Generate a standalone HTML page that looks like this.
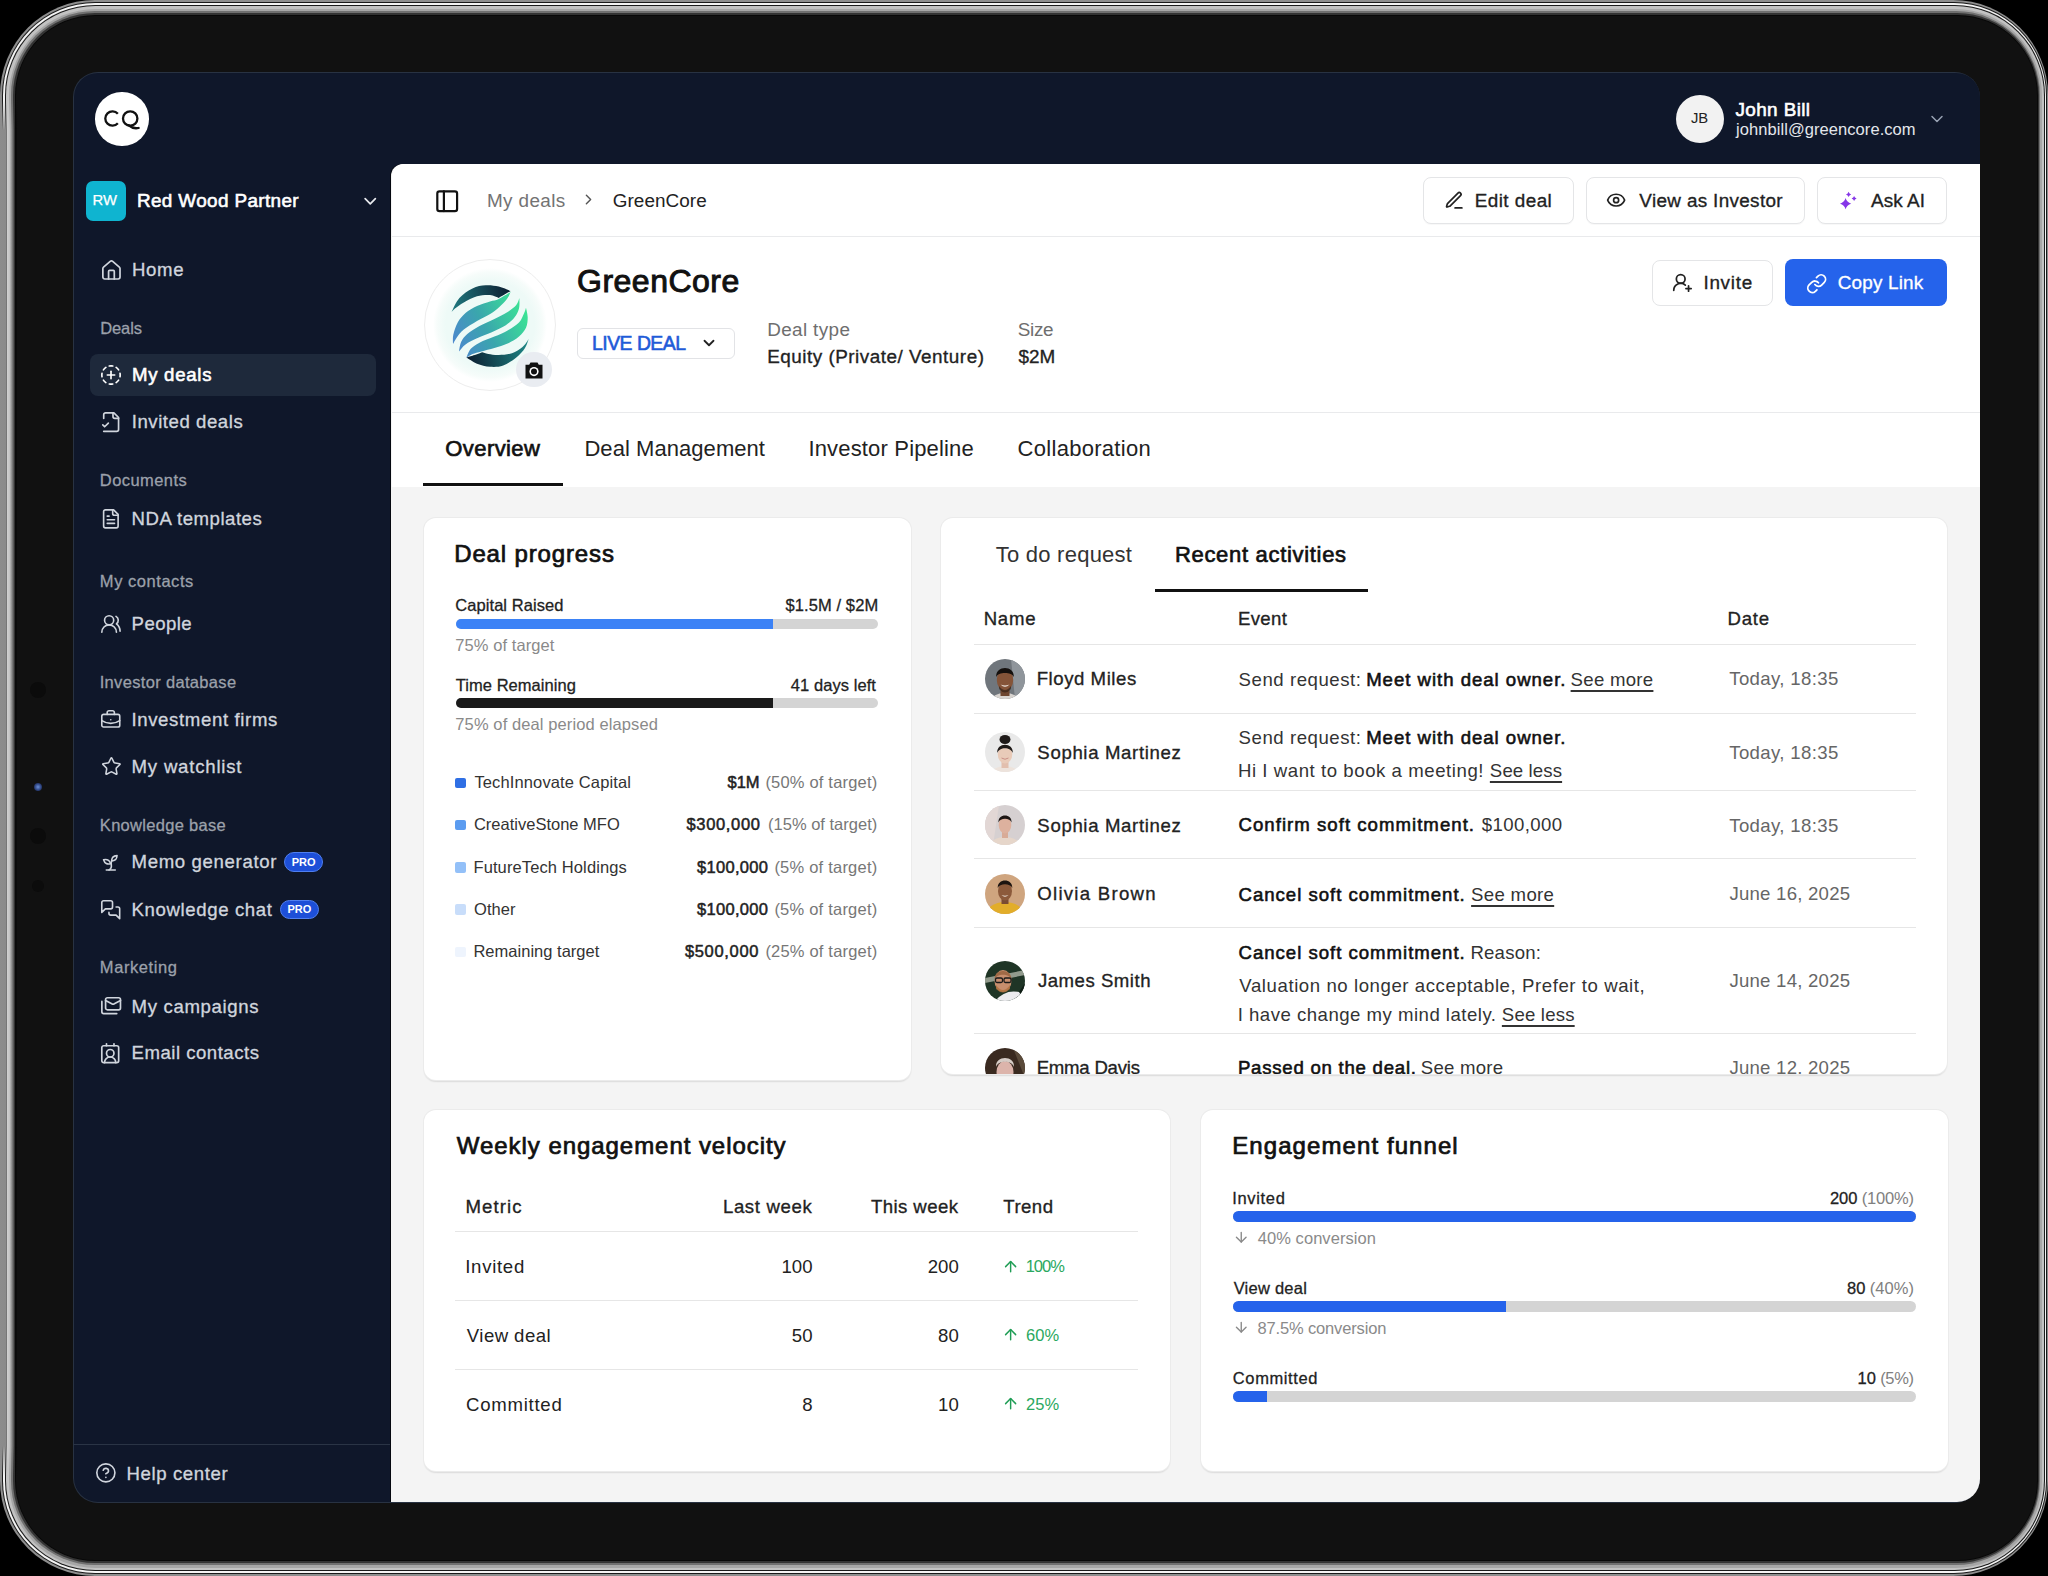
<!DOCTYPE html><html><head><meta charset="utf-8"><style>html,body{margin:0;padding:0;width:2048px;height:1576px;overflow:hidden;background:#000;font-family:"Liberation Sans", sans-serif;}*{box-sizing:border-box}</style></head><body>
<div style="position:absolute;left:0px;top:0px;right:0.00px;bottom:0px;border-radius:95px;background:#8e8e8e"></div>
<div style="position:absolute;left:1.8px;top:1.8px;right:1.24px;bottom:1.8px;border-radius:93.2px;background:#1a1a1a"></div>
<div style="position:absolute;left:2.8px;top:2.8px;right:1.93px;bottom:2.8px;border-radius:92.2px;background:#f4f4f4"></div>
<div style="position:absolute;left:4.8px;top:4.8px;right:3.31px;bottom:4.8px;border-radius:90.2px;background:#1c1c1c"></div>
<div style="position:absolute;left:5.6px;top:5.6px;right:3.86px;bottom:5.6px;border-radius:89.4px;background:#c2c2c2"></div>
<div style="position:absolute;left:8.5px;top:8.5px;right:5.86px;bottom:8.5px;border-radius:86.5px;background:#a6a6a6"></div>
<div style="position:absolute;left:11px;top:11px;right:7.59px;bottom:11px;border-radius:84px;background:#707070"></div>
<div style="position:absolute;left:13px;top:13px;right:8.97px;bottom:13px;border-radius:82px;background:#333"></div>
<div style="position:absolute;left:14.6px;top:14.6px;right:10.07px;bottom:14.6px;border-radius:80.4px;background:#080808"></div>
<div style="position:absolute;left:16px;top:16px;right:11.04px;bottom:16px;border-radius:79px;background:#111"></div>
<div style="position:absolute;top:100px;bottom:100px;left:0;width:17.5px;background:linear-gradient(to right,#8c8c8c 0,#8a8a8a 5.6px,#6a6a6a 6.4px,#d0d0d0 7.2px,#c4c4c4 9.5px,#a2a2a2 11px,#5a5a5a 13.5px,#0a0a0a 15.5px,#0a0a0a 16.3px,#111 17.5px);-webkit-mask-image:linear-gradient(to bottom,transparent 0,#000 30px,#000 calc(100% - 30px),transparent 100%)"></div>
<div style="position:absolute;left:30px;top:682px;width:16px;height:16px;border-radius:50%;background:#0b0b0b"></div>
<div style="position:absolute;left:30px;top:828px;width:16px;height:16px;border-radius:50%;background:#0b0b0b"></div>
<div style="position:absolute;left:32px;top:880px;width:12px;height:12px;border-radius:50%;background:#0c0c0c"></div>
<div style="position:absolute;left:34px;top:783px;width:8px;height:8px;border-radius:50%;background:radial-gradient(circle,#6a8fd8 0,#2a3f7a 60%,#111 100%)"></div>
<div style="position:absolute;left:72.6px;top:72px;width:1907.6px;height:1431.2px;border-radius:25px;background:#283242"></div>
<div style="position:absolute;left:73.9px;top:73.3px;width:1905.8px;height:1429px;border-radius:24px;background:#0f172a;overflow:hidden"></div>
<div style="position:absolute;left:95.00px;top:92.00px;width:53.50px;height:53.50px;border-radius:50%;background:#fff"></div>
<svg style="position:absolute;left:100px;top:105px;width:44px;height:30px" viewBox="0 0 44 30" fill="none" stroke="#111" stroke-width="2.3" stroke-linecap="butt"><path d="M17.85 8.68 A7.2 7.2 0 1 0 17.85 18.32"/><circle cx="30.2" cy="13.5" r="7.2"/><path d="M28.3 20.2 Q33 24.2 38.6 23" stroke-linecap="round"/></svg>
<div style="position:absolute;left:1676.00px;top:94.50px;width:48.00px;height:48.00px;border-radius:50%;background:#f2f2f2"></div>
<svg style="position:absolute;left:1927.00px;top:108.50px;width:20.00px;height:20.00px;" viewBox="0 0 24 24" fill="none" stroke="#98a2b3" stroke-width="1.8" stroke-linecap="round" stroke-linejoin="round"><path d="m6 9 6 6 6-6"/></svg>
<div style="position:absolute;left:86.00px;top:181.00px;width:40.00px;height:40.00px;border-radius:7px;background:#0fb4d0"></div>
<svg style="position:absolute;left:360.20px;top:190.50px;width:20.50px;height:20.50px;" viewBox="0 0 24 24" fill="none" stroke="#e8eaee" stroke-width="2" stroke-linecap="round" stroke-linejoin="round"><path d="m6 9 6 6 6-6"/></svg>
<div style="position:absolute;left:90.00px;top:354.00px;width:285.50px;height:42.00px;border-radius:8px;background:#1e293b"></div>
<svg style="position:absolute;left:99.50px;top:258.76px;width:22.89px;height:22.89px;" viewBox="0 0 24 24" fill="none" stroke="#d0d5dd" stroke-width="1.8" stroke-linecap="round" stroke-linejoin="round"><path d="M15 21v-8a1 1 0 0 0-1-1h-4a1 1 0 0 0-1 1v8"/><path d="M3 10a2 2 0 0 1 .709-1.528l7-5.999a2 2 0 0 1 2.582 0l7 5.999A2 2 0 0 1 21 10v9a2 2 0 0 1-2 2H5a2 2 0 0 1-2-2z"/></svg>
<svg style="position:absolute;left:99.99px;top:363.99px;width:22.02px;height:22.02px;" viewBox="0 0 24 24" fill="none" stroke="#fff" stroke-width="1.8" stroke-linecap="round" stroke-linejoin="round"><path d="M10.1 2.182a10 10 0 0 1 3.8 0"/><path d="M13.9 21.818a10 10 0 0 1-3.8 0"/><path d="M17.609 3.721a10 10 0 0 1 2.69 2.7"/><path d="M2.182 13.9a10 10 0 0 1 0-3.8"/><path d="M20.279 17.609a10 10 0 0 1-2.7 2.69"/><path d="M21.818 10.1a10 10 0 0 1 0 3.8"/><path d="M3.721 6.391a10 10 0 0 1 2.7-2.69"/><path d="M6.391 20.279a10 10 0 0 1-2.69-2.7"/><path d="M8 12h8"/><path d="M12 8v8"/></svg>
<svg style="position:absolute;left:99.55px;top:410.98px;width:22.27px;height:22.27px;" viewBox="0 0 24 24" fill="none" stroke="#d0d5dd" stroke-width="1.8" stroke-linecap="round" stroke-linejoin="round"><path d="M4 22h14a2 2 0 0 0 2-2V7l-5-5H6a2 2 0 0 0-2 2v4"/><path d="M14 2v4a2 2 0 0 0 2 2h4"/><path d="m3 15 2 2 4-4"/></svg>
<svg style="position:absolute;left:99.59px;top:507.50px;width:21.74px;height:21.74px;" viewBox="0 0 24 24" fill="none" stroke="#d0d5dd" stroke-width="1.8" stroke-linecap="round" stroke-linejoin="round"><path d="M15 2H6a2 2 0 0 0-2 2v16a2 2 0 0 0 2 2h12a2 2 0 0 0 2-2V7Z"/><path d="M14 2v4a2 2 0 0 0 2 2h4"/><path d="M10 9H8"/><path d="M16 13H8"/><path d="M16 17H8"/></svg>
<svg style="position:absolute;left:100.00px;top:613.08px;width:21.91px;height:21.91px;" viewBox="0 0 24 24" fill="none" stroke="#d0d5dd" stroke-width="1.8" stroke-linecap="round" stroke-linejoin="round"><path d="M18 21a8 8 0 0 0-16 0"/><circle cx="10" cy="8" r="5"/><path d="M22 20c0-3.37-2-6.5-4-8a5 5 0 0 0-.45-8.3"/></svg>
<svg style="position:absolute;left:100.01px;top:708.71px;width:21.55px;height:21.55px;" viewBox="0 0 24 24" fill="none" stroke="#d0d5dd" stroke-width="1.8" stroke-linecap="round" stroke-linejoin="round"><path d="M12 12h.01"/><path d="M16 6V4a2 2 0 0 0-2-2h-4a2 2 0 0 0-2 2v2"/><path d="M22 13a18.15 18.15 0 0 1-20 0"/><rect width="20" height="14" x="2" y="6" rx="2"/></svg>
<svg style="position:absolute;left:100.55px;top:756.35px;width:20.82px;height:20.82px;" viewBox="0 0 24 24" fill="none" stroke="#d0d5dd" stroke-width="1.8" stroke-linecap="round" stroke-linejoin="round"><path d="M11.525 2.295a.53.53 0 0 1 .95 0l2.31 4.679a2.123 2.123 0 0 0 1.595 1.16l5.166.756a.53.53 0 0 1 .294.904l-3.736 3.638a2.123 2.123 0 0 0-.611 1.878l.882 5.14a.53.53 0 0 1-.771.56l-4.618-2.428a2.122 2.122 0 0 0-1.973 0L6.396 21.01a.53.53 0 0 1-.77-.56l.881-5.139a2.122 2.122 0 0 0-.611-1.879L2.16 9.795a.53.53 0 0 1 .294-.906l5.165-.755a2.122 2.122 0 0 0 1.597-1.16z"/></svg>
<svg style="position:absolute;left:99.62px;top:851.62px;width:21.54px;height:21.54px;" viewBox="0 0 24 24" fill="none" stroke="#d0d5dd" stroke-width="1.8" stroke-linecap="round" stroke-linejoin="round"><path d="M7 20h10"/><path d="M10 20c5.5-2.5.8-6.4 3-10"/><path d="M9.5 9.4c1.1.8 1.8 2.2 2.3 3.7-2 .4-3.5.4-4.8-.3-1.2-.6-2.3-1.9-3-4.2 2.8-.5 4.4 0 5.5.8z"/><path d="M14.1 6a7 7 0 0 0-1.1 4c1.9-.1 3.3-.6 4.3-1.4 1-1 1.6-2.3 1.7-4.6-2.7.1-4 1-4.9 2z"/></svg>
<svg style="position:absolute;left:100.02px;top:899.32px;width:21.47px;height:21.47px;" viewBox="0 0 24 24" fill="none" stroke="#d0d5dd" stroke-width="1.8" stroke-linecap="round" stroke-linejoin="round"><path d="M14 9a2 2 0 0 1-2 2H6l-4 4V4a2 2 0 0 1 2-2h8a2 2 0 0 1 2 2z"/><path d="M18 9h2a2 2 0 0 1 2 2v11l-4-4h-6a2 2 0 0 1-2-2v-1"/></svg>
<svg style="position:absolute;left:99.98px;top:993.61px;width:22.35px;height:22.35px;" viewBox="0 0 24 24" fill="none" stroke="#d0d5dd" stroke-width="1.8" stroke-linecap="round" stroke-linejoin="round"><rect width="16" height="13" x="6" y="4" rx="2"/><path d="m22 7-7.1 3.78c-.57.3-1.23.3-1.8 0L6 7"/><path d="M2 8v11c0 1.1.9 2 2 2h14"/></svg>
<svg style="position:absolute;left:99.03px;top:1042.37px;width:22.47px;height:22.47px;" viewBox="0 0 24 24" fill="none" stroke="#d0d5dd" stroke-width="1.8" stroke-linecap="round" stroke-linejoin="round"><path d="M16 2v2"/><path d="M17.915 22a6 6 0 0 0-12 0"/><path d="M8 2v2"/><circle cx="12" cy="12" r="4"/><rect x="3" y="4" width="18" height="18" rx="2"/></svg>
<div style="position:absolute;left:284.30px;top:852.10px;width:38.80px;height:19.70px;border-radius:10px;background:#1d4fd8;border:1px solid #4f7ff0"></div>
<div style="position:absolute;left:280.00px;top:899.75px;width:39.00px;height:19.65px;border-radius:10px;background:#1d4fd8;border:1px solid #4f7ff0"></div>
<div style="position:absolute;left:73.00px;top:1444.00px;width:318.00px;height:1.00px;background:#2a3445"></div>
<svg style="position:absolute;left:94.90px;top:1462.30px;width:21.74px;height:21.74px;" viewBox="0 0 24 24" fill="none" stroke="#d0d5dd" stroke-width="1.8" stroke-linecap="round" stroke-linejoin="round"><circle cx="12" cy="12" r="10"/><path d="M9.09 9a3 3 0 0 1 5.83 1c0 2-3 3-3 3"/><path d="M12 17h.01"/></svg>
<div style="position:absolute;left:391px;top:163.5px;width:1588.7px;height:1338.8px;border-top-left-radius:12px;border-bottom-right-radius:23px;background:#f4f4f4;box-shadow:-1px 0 0 #05080f"></div>
<div style="position:absolute;left:391.5px;top:163.5px;width:1588.5px;height:323px;border-top-left-radius:12px;background:#fff"></div>
<div style="position:absolute;left:392.00px;top:236.00px;width:1588.00px;height:1.30px;background:#e9eaec"></div>
<div style="position:absolute;left:392.00px;top:412.00px;width:1588.00px;height:1.30px;background:#e9eaec"></div>
<svg style="position:absolute;left:433.80px;top:187.80px;width:26.40px;height:26.40px;" viewBox="0 0 24 24" fill="none" stroke="#111" stroke-width="2" stroke-linecap="round" stroke-linejoin="round"><rect width="18" height="18" x="3" y="3" rx="2"/><path d="M9 3v18"/></svg>
<svg style="position:absolute;left:580.00px;top:191.00px;width:17.00px;height:17.00px;" viewBox="0 0 24 24" fill="none" stroke="#555" stroke-width="2" stroke-linecap="round" stroke-linejoin="round"><path d="m9 18 6-6-6-6"/></svg>
<div style="position:absolute;left:1422.50px;top:177.00px;width:151.25px;height:46.50px;border:1px solid #e4e5e7;border-radius:8px;background:#fff;box-shadow:0 1px 1px rgba(0,0,0,0.03)"></div>
<div style="position:absolute;left:1585.50px;top:177.00px;width:219.50px;height:46.50px;border:1px solid #e4e5e7;border-radius:8px;background:#fff;box-shadow:0 1px 1px rgba(0,0,0,0.03)"></div>
<div style="position:absolute;left:1817.00px;top:177.00px;width:130.00px;height:46.50px;border:1px solid #e4e5e7;border-radius:8px;background:#fff;box-shadow:0 1px 1px rgba(0,0,0,0.03)"></div>
<svg style="position:absolute;left:1443.72px;top:190.30px;width:20.44px;height:20.44px;" viewBox="0 0 24 24" fill="none" stroke="#222" stroke-width="2" stroke-linecap="round" stroke-linejoin="round"><path d="M13 21h8"/><path d="M16.376 3.622a1 1 0 0 1 3.002 3.002L7.368 18.635a2 2 0 0 1-.855.506l-2.872.838a.5.5 0 0 1-.62-.62l.838-2.872a2 2 0 0 1 .506-.854z"/></svg>
<svg style="position:absolute;left:1606.16px;top:189.62px;width:20.25px;height:20.25px;" viewBox="0 0 24 24" fill="none" stroke="#222" stroke-width="2" stroke-linecap="round" stroke-linejoin="round"><path d="M2.062 12.348a1 1 0 0 1 0-.696 10.75 10.75 0 0 1 19.876 0 1 1 0 0 1 0 .696 10.75 10.75 0 0 1-19.876 0"/><circle cx="12" cy="12" r="3"/></svg>
<svg style="position:absolute;left:1836px;top:189px;width:24px;height:24px" viewBox="1836 189 24 24"><path fill="#8636e8" d="M1845.60 198.10 Q1846.83 202.47 1851.20 203.70 Q1846.83 204.93 1845.60 209.30 Q1844.37 204.93 1840.00 203.70 Q1844.37 202.47 1845.60 198.10Z M1848.60 191.80 Q1849.17 193.83 1851.20 194.40 Q1849.17 194.97 1848.60 197.00 Q1848.03 194.97 1846.00 194.40 Q1848.03 193.83 1848.60 191.80Z M1854.10 196.10 Q1854.65 198.05 1856.60 198.60 Q1854.65 199.15 1854.10 201.10 Q1853.55 199.15 1851.60 198.60 Q1853.55 198.05 1854.10 196.10Z"/></svg>
<div style="position:absolute;left:423.5px;top:258.7px;width:132.5px;height:132.5px;border-radius:50%;border:1.5px solid #ededed;background:#fff"></div>
<div style="position:absolute;left:432.5px;top:267.7px;width:114px;height:114px;border-radius:50%;background:radial-gradient(circle closest-side,#eefaf6 0%,#eefaf7 78%,#f6fcfa 92%,rgba(255,255,255,0) 100%)"></div>
<svg style="position:absolute;left:420px;top:256px;width:140px;height:138px" viewBox="0 0 140 138"><defs><linearGradient id="lgb" gradientUnits="userSpaceOnUse" x1="33" y1="90" x2="106" y2="50"><stop offset="0" stop-color="#4d86cf"/><stop offset="0.45" stop-color="#3aa6ad"/><stop offset="1" stop-color="#3be893"/></linearGradient><linearGradient id="lgt" gradientUnits="userSpaceOnUse" x1="31" y1="50" x2="91" y2="38"><stop offset="0" stop-color="#1f7a80"/><stop offset="1" stop-color="#0c1d30"/></linearGradient><linearGradient id="lgo" gradientUnits="userSpaceOnUse" x1="46" y1="100" x2="109" y2="85"><stop offset="0" stop-color="#0c1d30"/><stop offset="1" stop-color="#1f8a88"/></linearGradient></defs><path d="M31.50 56.00 C32.82 53.67 35.90 45.93 39.40 42.00 C42.90 38.07 48.12 34.52 52.50 32.40 C56.88 30.28 61.32 29.60 65.70 29.30 C70.08 29.00 74.65 29.65 78.80 30.60 C82.95 31.55 88.63 34.27 90.60 35.00 L90.60 35.00 C88.63 36.17 80.77 40.83 78.80 42.00 L78.80 42.00 C77.33 41.50 73.63 39.28 70.00 39.00 C66.37 38.72 61.37 39.07 57.00 40.30 C52.63 41.53 47.47 44.37 43.80 46.40 C40.13 48.43 37.05 50.90 35.00 52.50 C32.95 54.10 32.08 55.42 31.50 56.00 Z" fill="url(#lgt)"/><path d="M33.00 88.00 C33.05 86.47 32.52 82.38 33.30 78.80 C34.08 75.22 35.67 70.13 37.70 66.50 C39.73 62.87 42.28 59.75 45.50 57.00 C48.72 54.25 52.92 51.92 57.00 50.00 C61.08 48.08 66.37 46.67 70.00 45.50 C73.63 44.33 75.37 44.58 78.80 43.00 C82.23 41.42 88.63 37.17 90.60 36.00 L90.60 36.00 C90.10 37.00 89.13 39.83 87.60 42.00 C86.07 44.17 84.03 46.50 81.40 49.00 C78.77 51.50 75.87 54.33 71.80 57.00 C67.73 59.67 61.67 62.23 57.00 65.00 C52.33 67.77 47.17 70.87 43.80 73.60 C40.43 76.33 38.60 79.00 36.80 81.40 C35.00 83.80 33.63 86.90 33.00 88.00 Z" fill="url(#lgb)"/><path d="M39.00 95.40 C39.37 93.80 39.82 88.70 41.20 85.80 C42.58 82.90 44.25 80.63 47.30 78.00 C50.35 75.37 54.98 72.50 59.50 70.00 C64.02 67.50 69.72 65.33 74.40 63.00 C79.08 60.67 83.95 58.33 87.60 56.00 C91.25 53.67 94.33 51.33 96.30 49.00 C98.27 46.67 98.88 43.17 99.40 42.00 L99.40 42.00 C99.33 43.75 99.80 49.28 99.00 52.50 C98.20 55.72 96.80 58.52 94.60 61.30 C92.40 64.08 89.60 66.72 85.80 69.20 C82.00 71.68 76.60 74.02 71.80 76.20 C67.00 78.38 61.38 80.27 57.00 82.30 C52.62 84.33 48.50 86.22 45.50 88.40 C42.50 90.58 40.08 94.23 39.00 95.40 Z" fill="url(#lgb)"/><path d="M46.40 101.60 C47.13 100.13 48.62 95.28 50.80 92.80 C52.98 90.32 55.57 88.73 59.50 86.70 C63.43 84.67 69.72 82.65 74.40 80.60 C79.08 78.55 83.50 76.75 87.60 74.40 C91.70 72.05 96.23 69.40 99.00 66.50 C101.77 63.60 103.03 59.47 104.20 57.00 C105.37 54.53 105.70 52.58 106.00 51.70 L106.00 51.70 C106.28 53.30 107.70 57.95 107.70 61.30 C107.70 64.65 107.45 68.58 106.00 71.80 C104.55 75.02 102.07 77.97 99.00 80.60 C95.93 83.23 91.70 85.70 87.60 87.60 C83.50 89.50 78.78 90.70 74.40 92.00 C70.02 93.30 64.95 94.40 61.30 95.40 C57.65 96.40 54.98 96.97 52.50 98.00 C50.02 99.03 47.42 101.00 46.40 101.60 Z" fill="url(#lgb)"/><path d="M46.40 101.60 C48.17 102.62 53.07 106.17 57.00 107.70 C60.93 109.23 65.63 110.50 70.00 110.80 C74.37 111.10 78.82 111.03 83.20 109.50 C87.58 107.97 92.67 104.52 96.30 101.60 C99.93 98.68 102.95 95.07 105.00 92.00 C107.05 88.93 108.00 84.67 108.60 83.20 L108.60 83.20 C107.58 84.50 105.27 88.67 102.50 91.00 C99.73 93.33 95.95 95.87 92.00 97.20 C88.05 98.53 82.75 98.87 78.80 99.00 C74.85 99.13 71.07 98.45 68.30 98.00 C65.53 97.55 63.22 96.58 62.20 96.30 L62.20 96.30 C60.58 96.88 55.13 98.92 52.50 99.80 C49.87 100.68 47.42 101.30 46.40 101.60 Z" fill="url(#lgo)"/></svg>
<div style="position:absolute;left:516px;top:351.5px;width:35.5px;height:35.5px;border-radius:50%;background:#e9ecf1"></div>
<svg style="position:absolute;left:525px;top:361.5px;width:18px;height:17px" viewBox="0 0 18 17"><path fill="#111" d="M5.5 0.5 H12.5 L13.8 2.8 H17.5 V16.5 H0.5 V2.8 H4.2Z"/><circle cx="9" cy="9.6" r="4.6" fill="#fff"/><circle cx="9" cy="9.6" r="3" fill="#111"/></svg>
<div style="position:absolute;left:577.00px;top:328.00px;width:158.00px;height:30.75px;border:1px solid #e2e3e6;border-radius:6px;background:#fff"></div>
<svg style="position:absolute;left:700.00px;top:334.00px;width:18.00px;height:18.00px;" viewBox="0 0 24 24" fill="none" stroke="#222" stroke-width="2.4" stroke-linecap="round" stroke-linejoin="round"><path d="m6 9 6 6 6-6"/></svg>
<div style="position:absolute;left:1652.00px;top:259.50px;width:121.25px;height:46.50px;border:1px solid #e4e5e7;border-radius:8px;background:#fff"></div>
<svg style="position:absolute;left:1672.13px;top:272.26px;width:20.92px;height:20.92px;" viewBox="0 0 24 24" fill="none" stroke="#222" stroke-width="2" stroke-linecap="round" stroke-linejoin="round"><path d="M2 21a8 8 0 0 1 13.292-6"/><circle cx="10" cy="8" r="5"/><path d="M19 16v6"/><path d="M22 19h-6"/></svg>
<div style="position:absolute;left:1785.00px;top:259.00px;width:162.00px;height:47.00px;border-radius:8px;background:#2563eb"></div>
<svg style="position:absolute;left:1805.91px;top:272.61px;width:21.38px;height:21.38px;" viewBox="0 0 24 24" fill="none" stroke="#fff" stroke-width="2" stroke-linecap="round" stroke-linejoin="round"><path d="M10 13a5 5 0 0 0 7.54.54l3-3a5 5 0 0 0-7.07-7.07l-1.72 1.71"/><path d="M14 11a5 5 0 0 0-7.54-.54l-3 3a5 5 0 0 0 7.07 7.07l1.71-1.71"/></svg>
<div style="position:absolute;left:423.40px;top:483.00px;width:139.90px;height:3.00px;background:#111"></div>
<div style="position:absolute;left:424.00px;top:518.00px;width:487.00px;height:562.00px;border-radius:12px;background:#fff;box-shadow:0 0 0 1px #ebebeb,0 1.2px 1.5px rgba(0,0,0,0.10)"></div>
<div style="position:absolute;left:941.00px;top:518.00px;width:1006.00px;height:556.00px;border-radius:12px;background:#fff;box-shadow:0 0 0 1px #ebebeb,0 1.2px 1.5px rgba(0,0,0,0.10)"></div>
<div style="position:absolute;left:424.00px;top:1110.00px;width:745.50px;height:361.00px;border-radius:12px;background:#fff;box-shadow:0 0 0 1px #ebebeb,0 1.2px 1.5px rgba(0,0,0,0.10)"></div>
<div style="position:absolute;left:1201.00px;top:1110.00px;width:746.50px;height:361.00px;border-radius:12px;background:#fff;box-shadow:0 0 0 1px #ebebeb,0 1.2px 1.5px rgba(0,0,0,0.10)"></div>
<div style="position:absolute;left:455.50px;top:618.75px;width:422.50px;height:10.50px;border-radius:6px;background:#d4d4d4;overflow:hidden"><div style="position:absolute;left:0;top:0;bottom:0;width:317px;background:#3b82f6"></div></div>
<div style="position:absolute;left:455.50px;top:698.25px;width:422.50px;height:10.00px;border-radius:6px;background:#d4d4d4;overflow:hidden"><div style="position:absolute;left:0;top:0;bottom:0;width:317px;background:#1a1a1a"></div></div>
<div style="position:absolute;left:455.30px;top:777.50px;width:10.50px;height:10.50px;border-radius:2px;background:#2f6fe4"></div>
<div style="position:absolute;left:455.30px;top:819.77px;width:10.50px;height:10.50px;border-radius:2px;background:#5b9cf0"></div>
<div style="position:absolute;left:455.30px;top:862.04px;width:10.50px;height:10.50px;border-radius:2px;background:#93c0f8"></div>
<div style="position:absolute;left:455.30px;top:904.31px;width:10.50px;height:10.50px;border-radius:2px;background:#c8ddfa"></div>
<div style="position:absolute;left:455.30px;top:946.58px;width:10.50px;height:10.50px;border-radius:2px;background:#eef4fd"></div>
<div style="position:absolute;left:455.00px;top:1231.00px;width:682.50px;height:1.20px;background:#e6e6e6"></div>
<div style="position:absolute;left:455.00px;top:1300.00px;width:682.50px;height:1.20px;background:#e6e6e6"></div>
<div style="position:absolute;left:455.00px;top:1369.00px;width:682.50px;height:1.20px;background:#e6e6e6"></div>
<svg style="position:absolute;left:1001.62px;top:1257.62px;width:17.25px;height:17.25px;" viewBox="0 0 24 24" fill="none" stroke="#1f9d55" stroke-width="2.0" stroke-linecap="round" stroke-linejoin="round"><path d="m5 12 7-7 7 7"/><path d="M12 19V5"/></svg>
<svg style="position:absolute;left:1001.62px;top:1326.38px;width:17.25px;height:17.25px;" viewBox="0 0 24 24" fill="none" stroke="#1f9d55" stroke-width="2.0" stroke-linecap="round" stroke-linejoin="round"><path d="m5 12 7-7 7 7"/><path d="M12 19V5"/></svg>
<svg style="position:absolute;left:1001.62px;top:1395.12px;width:17.25px;height:17.25px;" viewBox="0 0 24 24" fill="none" stroke="#1f9d55" stroke-width="2.0" stroke-linecap="round" stroke-linejoin="round"><path d="m5 12 7-7 7 7"/><path d="M12 19V5"/></svg>
<div style="position:absolute;left:1233.00px;top:1211.25px;width:682.50px;height:10.50px;border-radius:6px;background:#d4d4d4;overflow:hidden"><div style="position:absolute;left:0;top:0;bottom:0;width:682.5px;background:#2563eb"></div></div>
<div style="position:absolute;left:1233.00px;top:1301.25px;width:682.50px;height:10.50px;border-radius:6px;background:#d4d4d4;overflow:hidden"><div style="position:absolute;left:0;top:0;bottom:0;width:272.5px;background:#2563eb"></div></div>
<div style="position:absolute;left:1233.00px;top:1391.25px;width:682.50px;height:10.50px;border-radius:6px;background:#d4d4d4;overflow:hidden"><div style="position:absolute;left:0;top:0;bottom:0;width:34.0px;background:#2563eb"></div></div>
<svg style="position:absolute;left:1233.25px;top:1229.25px;width:16.50px;height:16.50px;" viewBox="0 0 24 24" fill="none" stroke="#8a8a8a" stroke-width="2" stroke-linecap="round" stroke-linejoin="round"><path d="M12 5v14"/><path d="m19 12-7 7-7-7"/></svg>
<svg style="position:absolute;left:1233.25px;top:1319.25px;width:16.50px;height:16.50px;" viewBox="0 0 24 24" fill="none" stroke="#8a8a8a" stroke-width="2" stroke-linecap="round" stroke-linejoin="round"><path d="M12 5v14"/><path d="m19 12-7 7-7-7"/></svg>
<div style="position:absolute;left:1690.97px;top:111.00px;font-size:14.80px;line-height:14.80px;font-weight:400;color:#222;letter-spacing:0.000px;white-space:nowrap;">JB</div>
<div style="position:absolute;left:1735.40px;top:101.00px;font-size:18.90px;line-height:18.90px;font-weight:400;-webkit-text-stroke:0.59px currentColor;color:#fff;letter-spacing:0.407px;white-space:nowrap;">John Bill</div>
<div style="position:absolute;left:1736.10px;top:121.00px;font-size:16.50px;line-height:16.50px;font-weight:400;color:#e4e7ec;letter-spacing:0.062px;white-space:nowrap;">johnbill@greencore.com</div>
<div style="position:absolute;left:92.49px;top:193.00px;font-size:14.80px;line-height:14.80px;font-weight:400;-webkit-text-stroke:0.25px currentColor;color:#fff;letter-spacing:0.000px;white-space:nowrap;">RW</div>
<div style="position:absolute;left:136.90px;top:192.00px;font-size:18.90px;line-height:18.90px;font-weight:400;-webkit-text-stroke:0.59px currentColor;color:#fff;letter-spacing:0.374px;white-space:nowrap;">Red Wood Partner</div>
<div style="position:absolute;left:131.92px;top:261.00px;font-size:18.60px;line-height:18.60px;font-weight:400;-webkit-text-stroke:0.32px currentColor;color:#d0d5dd;letter-spacing:0.701px;white-space:nowrap;">Home</div>
<div style="position:absolute;left:131.92px;top:366.00px;font-size:18.60px;line-height:18.60px;font-weight:400;-webkit-text-stroke:0.58px currentColor;color:#fff;letter-spacing:0.735px;white-space:nowrap;">My deals</div>
<div style="position:absolute;left:131.73px;top:413.00px;font-size:18.60px;line-height:18.60px;font-weight:400;-webkit-text-stroke:0.32px currentColor;color:#d0d5dd;letter-spacing:0.549px;white-space:nowrap;">Invited deals</div>
<div style="position:absolute;left:131.57px;top:510.00px;font-size:18.60px;line-height:18.60px;font-weight:400;-webkit-text-stroke:0.32px currentColor;color:#d0d5dd;letter-spacing:0.514px;white-space:nowrap;">NDA templates</div>
<div style="position:absolute;left:131.57px;top:615.00px;font-size:18.60px;line-height:18.60px;font-weight:400;-webkit-text-stroke:0.32px currentColor;color:#d0d5dd;letter-spacing:0.431px;white-space:nowrap;">People</div>
<div style="position:absolute;left:131.38px;top:711.00px;font-size:18.60px;line-height:18.60px;font-weight:400;-webkit-text-stroke:0.32px currentColor;color:#d0d5dd;letter-spacing:0.640px;white-space:nowrap;">Investment firms</div>
<div style="position:absolute;left:131.57px;top:758.00px;font-size:18.60px;line-height:18.60px;font-weight:400;-webkit-text-stroke:0.32px currentColor;color:#d0d5dd;letter-spacing:0.792px;white-space:nowrap;">My watchlist</div>
<div style="position:absolute;left:131.57px;top:853.00px;font-size:18.60px;line-height:18.60px;font-weight:400;-webkit-text-stroke:0.32px currentColor;color:#d0d5dd;letter-spacing:0.647px;white-space:nowrap;">Memo generator</div>
<div style="position:absolute;left:131.57px;top:901.00px;font-size:18.60px;line-height:18.60px;font-weight:400;-webkit-text-stroke:0.32px currentColor;color:#d0d5dd;letter-spacing:0.619px;white-space:nowrap;">Knowledge chat</div>
<div style="position:absolute;left:131.57px;top:998.00px;font-size:18.60px;line-height:18.60px;font-weight:400;-webkit-text-stroke:0.32px currentColor;color:#d0d5dd;letter-spacing:0.648px;white-space:nowrap;">My campaigns</div>
<div style="position:absolute;left:131.57px;top:1044.00px;font-size:18.60px;line-height:18.60px;font-weight:400;-webkit-text-stroke:0.32px currentColor;color:#d0d5dd;letter-spacing:0.499px;white-space:nowrap;">Email contacts</div>
<div style="position:absolute;left:100.35px;top:320.00px;font-size:16.50px;line-height:16.50px;font-weight:400;-webkit-text-stroke:0.28px currentColor;color:#9ca1ab;letter-spacing:-0.159px;white-space:nowrap;">Deals</div>
<div style="position:absolute;left:99.85px;top:472.00px;font-size:16.50px;line-height:16.50px;font-weight:400;-webkit-text-stroke:0.28px currentColor;color:#9ca1ab;letter-spacing:0.425px;white-space:nowrap;">Documents</div>
<div style="position:absolute;left:99.85px;top:573.00px;font-size:16.50px;line-height:16.50px;font-weight:400;-webkit-text-stroke:0.28px currentColor;color:#9ca1ab;letter-spacing:0.542px;white-space:nowrap;">My contacts</div>
<div style="position:absolute;left:99.68px;top:674.00px;font-size:16.50px;line-height:16.50px;font-weight:400;-webkit-text-stroke:0.28px currentColor;color:#9ca1ab;letter-spacing:0.330px;white-space:nowrap;">Investor database</div>
<div style="position:absolute;left:99.85px;top:817.00px;font-size:16.50px;line-height:16.50px;font-weight:400;-webkit-text-stroke:0.28px currentColor;color:#9ca1ab;letter-spacing:0.291px;white-space:nowrap;">Knowledge base</div>
<div style="position:absolute;left:99.85px;top:959.00px;font-size:16.50px;line-height:16.50px;font-weight:400;-webkit-text-stroke:0.28px currentColor;color:#9ca1ab;letter-spacing:0.571px;white-space:nowrap;">Marketing</div>
<div style="position:absolute;left:291.76px;top:856.72px;font-size:11.00px;line-height:11.00px;font-weight:700;color:#fff;letter-spacing:0.000px;white-space:nowrap;">PRO</div>
<div style="position:absolute;left:287.46px;top:904.37px;font-size:11.00px;line-height:11.00px;font-weight:700;color:#fff;letter-spacing:0.000px;white-space:nowrap;">PRO</div>
<div style="position:absolute;left:126.57px;top:1465.00px;font-size:18.60px;line-height:18.60px;font-weight:400;-webkit-text-stroke:0.32px currentColor;color:#d0d5dd;letter-spacing:0.595px;white-space:nowrap;">Help center</div>
<div style="position:absolute;left:486.90px;top:192.00px;font-size:18.90px;line-height:18.90px;font-weight:400;color:#737373;letter-spacing:0.392px;white-space:nowrap;">My deals</div>
<div style="position:absolute;left:612.75px;top:192.00px;font-size:18.90px;line-height:18.90px;font-weight:400;color:#222;letter-spacing:0.055px;white-space:nowrap;">GreenCore</div>
<div style="position:absolute;left:1474.65px;top:192.00px;font-size:18.90px;line-height:18.90px;font-weight:400;-webkit-text-stroke:0.32px currentColor;color:#222;letter-spacing:0.456px;white-space:nowrap;">Edit deal</div>
<div style="position:absolute;left:1639.37px;top:192.00px;font-size:18.90px;line-height:18.90px;font-weight:400;-webkit-text-stroke:0.32px currentColor;color:#222;letter-spacing:0.333px;white-space:nowrap;">View as Investor</div>
<div style="position:absolute;left:1870.96px;top:192.00px;font-size:18.90px;line-height:18.90px;font-weight:400;-webkit-text-stroke:0.32px currentColor;color:#222;letter-spacing:0.099px;white-space:nowrap;">Ask AI</div>
<div style="position:absolute;left:577.09px;top:264.99px;font-size:32.00px;line-height:32.00px;font-weight:400;-webkit-text-stroke:0.99px currentColor;color:#111;letter-spacing:0.479px;white-space:nowrap;">GreenCore</div>
<div style="position:absolute;left:592.11px;top:334.00px;font-size:19.40px;line-height:19.40px;font-weight:400;-webkit-text-stroke:0.60px currentColor;color:#1f5bd8;letter-spacing:-0.531px;white-space:nowrap;">LIVE DEAL</div>
<div style="position:absolute;left:767.15px;top:321.00px;font-size:18.90px;line-height:18.90px;font-weight:400;color:#6e6e6e;letter-spacing:0.367px;white-space:nowrap;">Deal type</div>
<div style="position:absolute;left:767.15px;top:348.00px;font-size:18.90px;line-height:18.90px;font-weight:400;-webkit-text-stroke:0.32px currentColor;color:#222;letter-spacing:0.503px;white-space:nowrap;">Equity (Private/ Venture)</div>
<div style="position:absolute;left:1017.84px;top:321.00px;font-size:18.90px;line-height:18.90px;font-weight:400;color:#6e6e6e;letter-spacing:-0.317px;white-space:nowrap;">Size</div>
<div style="position:absolute;left:1018.50px;top:348.00px;font-size:18.90px;line-height:18.90px;font-weight:400;-webkit-text-stroke:0.32px currentColor;color:#222;letter-spacing:0.000px;white-space:nowrap;">$2M</div>
<div style="position:absolute;left:1703.46px;top:274.00px;font-size:18.90px;line-height:18.90px;font-weight:400;-webkit-text-stroke:0.32px currentColor;color:#222;letter-spacing:0.707px;white-space:nowrap;">Invite</div>
<div style="position:absolute;left:1837.74px;top:274.00px;font-size:18.90px;line-height:18.90px;font-weight:400;-webkit-text-stroke:0.32px currentColor;color:#fff;letter-spacing:0.191px;white-space:nowrap;">Copy Link</div>
<div style="position:absolute;left:445.36px;top:437.79px;font-size:22.00px;line-height:22.00px;font-weight:400;-webkit-text-stroke:0.68px currentColor;color:#111;letter-spacing:0.401px;white-space:nowrap;">Overview</div>
<div style="position:absolute;left:584.40px;top:437.79px;font-size:22.00px;line-height:22.00px;font-weight:400;color:#222;letter-spacing:0.057px;white-space:nowrap;">Deal Management</div>
<div style="position:absolute;left:808.42px;top:437.79px;font-size:22.00px;line-height:22.00px;font-weight:400;color:#222;letter-spacing:0.169px;white-space:nowrap;">Investor Pipeline</div>
<div style="position:absolute;left:1017.58px;top:437.79px;font-size:22.00px;line-height:22.00px;font-weight:400;color:#222;letter-spacing:0.292px;white-space:nowrap;">Collaboration</div>
<div style="position:absolute;left:454.23px;top:541.53px;font-size:24.00px;line-height:24.00px;font-weight:400;-webkit-text-stroke:0.74px currentColor;color:#111;letter-spacing:0.857px;white-space:nowrap;">Deal progress</div>
<div style="position:absolute;left:455.36px;top:597.00px;font-size:16.50px;line-height:16.50px;font-weight:400;-webkit-text-stroke:0.28px currentColor;color:#222;letter-spacing:0.053px;white-space:nowrap;">Capital Raised</div>
<div style="position:absolute;left:785.52px;top:597.00px;font-size:16.50px;line-height:16.50px;font-weight:400;-webkit-text-stroke:0.28px currentColor;color:#222;letter-spacing:0.092px;white-space:nowrap;">$1.5M / $2M</div>
<div style="position:absolute;left:455.35px;top:637.00px;font-size:16.50px;line-height:16.50px;font-weight:400;color:#8a8a8a;letter-spacing:0.077px;white-space:nowrap;">75% of target</div>
<div style="position:absolute;left:455.83px;top:677.00px;font-size:16.50px;line-height:16.50px;font-weight:400;-webkit-text-stroke:0.28px currentColor;color:#222;letter-spacing:0.040px;white-space:nowrap;">Time Remaining</div>
<div style="position:absolute;left:790.82px;top:677.00px;font-size:16.50px;line-height:16.50px;font-weight:400;-webkit-text-stroke:0.28px currentColor;color:#222;letter-spacing:0.065px;white-space:nowrap;">41 days left</div>
<div style="position:absolute;left:455.35px;top:716.00px;font-size:16.50px;line-height:16.50px;font-weight:400;color:#8a8a8a;letter-spacing:0.101px;white-space:nowrap;">75% of deal period elapsed</div>
<div style="position:absolute;left:474.43px;top:774.00px;font-size:16.50px;line-height:16.50px;font-weight:400;color:#333;letter-spacing:0.125px;white-space:nowrap;">TechInnovate Capital</div>
<div style="position:absolute;left:727.52px;top:774.00px;font-size:16.50px;line-height:16.50px;font-weight:400;-webkit-text-stroke:0.51px currentColor;color:#222;letter-spacing:0.000px;white-space:nowrap;">$1M</div>
<div style="position:absolute;left:765.38px;top:774.00px;font-size:16.50px;line-height:16.50px;font-weight:400;color:#777;letter-spacing:0.194px;white-space:nowrap;">(50% of target)</div>
<div style="position:absolute;left:473.96px;top:816.00px;font-size:16.50px;line-height:16.50px;font-weight:400;color:#333;letter-spacing:0.002px;white-space:nowrap;">CreativeStone MFO</div>
<div style="position:absolute;left:686.52px;top:816.00px;font-size:16.50px;line-height:16.50px;font-weight:400;-webkit-text-stroke:0.51px currentColor;color:#222;letter-spacing:0.657px;white-space:nowrap;">$300,000</div>
<div style="position:absolute;left:768.08px;top:816.00px;font-size:16.50px;line-height:16.50px;font-weight:400;color:#777;letter-spacing:0.001px;white-space:nowrap;">(15% of target)</div>
<div style="position:absolute;left:473.45px;top:859.00px;font-size:16.50px;line-height:16.50px;font-weight:400;color:#333;letter-spacing:0.112px;white-space:nowrap;">FutureTech Holdings</div>
<div style="position:absolute;left:697.02px;top:859.00px;font-size:16.50px;line-height:16.50px;font-weight:400;-webkit-text-stroke:0.51px currentColor;color:#222;letter-spacing:0.300px;white-space:nowrap;">$100,000</div>
<div style="position:absolute;left:774.38px;top:859.00px;font-size:16.50px;line-height:16.50px;font-weight:400;color:#777;letter-spacing:0.222px;white-space:nowrap;">(5% of target)</div>
<div style="position:absolute;left:474.02px;top:901.00px;font-size:16.50px;line-height:16.50px;font-weight:400;color:#333;letter-spacing:0.047px;white-space:nowrap;">Other</div>
<div style="position:absolute;left:697.02px;top:901.00px;font-size:16.50px;line-height:16.50px;font-weight:400;-webkit-text-stroke:0.51px currentColor;color:#222;letter-spacing:0.300px;white-space:nowrap;">$100,000</div>
<div style="position:absolute;left:774.38px;top:901.00px;font-size:16.50px;line-height:16.50px;font-weight:400;color:#777;letter-spacing:0.222px;white-space:nowrap;">(5% of target)</div>
<div style="position:absolute;left:473.45px;top:943.00px;font-size:16.50px;line-height:16.50px;font-weight:400;color:#333;letter-spacing:0.015px;white-space:nowrap;">Remaining target</div>
<div style="position:absolute;left:684.92px;top:943.00px;font-size:16.50px;line-height:16.50px;font-weight:400;-webkit-text-stroke:0.51px currentColor;color:#222;letter-spacing:0.672px;white-space:nowrap;">$500,000</div>
<div style="position:absolute;left:765.38px;top:943.00px;font-size:16.50px;line-height:16.50px;font-weight:400;color:#777;letter-spacing:0.194px;white-space:nowrap;">(25% of target)</div>
<div style="position:absolute;left:456.84px;top:1134.03px;font-size:24.00px;line-height:24.00px;font-weight:400;-webkit-text-stroke:0.74px currentColor;color:#111;letter-spacing:0.948px;white-space:nowrap;">Weekly engagement velocity</div>
<div style="position:absolute;left:465.42px;top:1198.00px;font-size:18.60px;line-height:18.60px;font-weight:400;-webkit-text-stroke:0.32px currentColor;color:#222;letter-spacing:1.100px;white-space:nowrap;">Metric</div>
<div style="position:absolute;left:722.92px;top:1198.00px;font-size:18.60px;line-height:18.60px;font-weight:400;-webkit-text-stroke:0.32px currentColor;color:#222;letter-spacing:0.641px;white-space:nowrap;">Last week</div>
<div style="position:absolute;left:871.03px;top:1198.00px;font-size:18.60px;line-height:18.60px;font-weight:400;-webkit-text-stroke:0.32px currentColor;color:#222;letter-spacing:0.411px;white-space:nowrap;">This week</div>
<div style="position:absolute;left:1003.28px;top:1198.00px;font-size:18.60px;line-height:18.60px;font-weight:400;-webkit-text-stroke:0.32px currentColor;color:#222;letter-spacing:0.459px;white-space:nowrap;">Trend</div>
<div style="position:absolute;left:465.23px;top:1258.00px;font-size:18.60px;line-height:18.60px;font-weight:400;color:#222;letter-spacing:0.705px;white-space:nowrap;">Invited</div>
<div style="position:absolute;left:781.50px;top:1258.00px;font-size:18.60px;line-height:18.60px;font-weight:400;color:#222;letter-spacing:0.000px;white-space:nowrap;">100</div>
<div style="position:absolute;left:927.75px;top:1258.00px;font-size:18.60px;line-height:18.60px;font-weight:400;color:#222;letter-spacing:0.000px;white-space:nowrap;">200</div>
<div style="position:absolute;left:1025.69px;top:1258.00px;font-size:16.50px;line-height:16.50px;font-weight:400;color:#2aa860;letter-spacing:-1.002px;white-space:nowrap;">100%</div>
<div style="position:absolute;left:466.87px;top:1327.00px;font-size:18.60px;line-height:18.60px;font-weight:400;color:#222;letter-spacing:0.424px;white-space:nowrap;">View deal</div>
<div style="position:absolute;left:791.84px;top:1327.00px;font-size:18.60px;line-height:18.60px;font-weight:400;color:#222;letter-spacing:0.000px;white-space:nowrap;">50</div>
<div style="position:absolute;left:938.09px;top:1327.00px;font-size:18.60px;line-height:18.60px;font-weight:400;color:#222;letter-spacing:0.000px;white-space:nowrap;">80</div>
<div style="position:absolute;left:1026.11px;top:1327.00px;font-size:16.50px;line-height:16.50px;font-weight:400;color:#2aa860;letter-spacing:0.000px;white-space:nowrap;">60%</div>
<div style="position:absolute;left:466.01px;top:1396.00px;font-size:18.60px;line-height:18.60px;font-weight:400;color:#222;letter-spacing:0.732px;white-space:nowrap;">Committed</div>
<div style="position:absolute;left:802.27px;top:1396.00px;font-size:18.60px;line-height:18.60px;font-weight:400;color:#222;letter-spacing:0.000px;white-space:nowrap;">8</div>
<div style="position:absolute;left:938.09px;top:1396.00px;font-size:18.60px;line-height:18.60px;font-weight:400;color:#222;letter-spacing:0.000px;white-space:nowrap;">10</div>
<div style="position:absolute;left:1026.12px;top:1396.00px;font-size:16.50px;line-height:16.50px;font-weight:400;color:#2aa860;letter-spacing:0.000px;white-space:nowrap;">25%</div>
<div style="position:absolute;left:1232.23px;top:1134.03px;font-size:24.00px;line-height:24.00px;font-weight:400;-webkit-text-stroke:0.74px currentColor;color:#111;letter-spacing:1.082px;white-space:nowrap;">Engagement funnel</div>
<div style="position:absolute;left:1232.18px;top:1190.00px;font-size:16.50px;line-height:16.50px;font-weight:400;-webkit-text-stroke:0.28px currentColor;color:#222;letter-spacing:0.679px;white-space:nowrap;">Invited</div>
<div style="position:absolute;left:1829.91px;top:1190.00px;font-size:16.50px;line-height:16.50px;font-weight:400;-webkit-text-stroke:0.28px currentColor;color:#222;letter-spacing:0.000px;white-space:nowrap;">200</div>
<div style="position:absolute;left:1861.68px;top:1190.00px;font-size:16.50px;line-height:16.50px;font-weight:400;color:#808080;letter-spacing:-0.159px;white-space:nowrap;">(100%)</div>
<div style="position:absolute;left:1233.63px;top:1280.00px;font-size:16.50px;line-height:16.50px;font-weight:400;-webkit-text-stroke:0.28px currentColor;color:#222;letter-spacing:0.241px;white-space:nowrap;">View deal</div>
<div style="position:absolute;left:1847.09px;top:1280.00px;font-size:16.50px;line-height:16.50px;font-weight:400;-webkit-text-stroke:0.28px currentColor;color:#222;letter-spacing:0.000px;white-space:nowrap;">80</div>
<div style="position:absolute;left:1869.68px;top:1280.00px;font-size:16.50px;line-height:16.50px;font-weight:400;color:#808080;letter-spacing:0.096px;white-space:nowrap;">(40%)</div>
<div style="position:absolute;left:1232.86px;top:1370.00px;font-size:16.50px;line-height:16.50px;font-weight:400;-webkit-text-stroke:0.28px currentColor;color:#222;letter-spacing:0.592px;white-space:nowrap;">Committed</div>
<div style="position:absolute;left:1857.59px;top:1370.00px;font-size:16.50px;line-height:16.50px;font-weight:400;-webkit-text-stroke:0.28px currentColor;color:#222;letter-spacing:0.000px;white-space:nowrap;">10</div>
<div style="position:absolute;left:1880.18px;top:1370.00px;font-size:16.50px;line-height:16.50px;font-weight:400;color:#808080;letter-spacing:-0.314px;white-space:nowrap;">(5%)</div>
<div style="position:absolute;left:1257.82px;top:1230.00px;font-size:16.50px;line-height:16.50px;font-weight:400;color:#8a8a8a;letter-spacing:0.050px;white-space:nowrap;">40% conversion</div>
<div style="position:absolute;left:1257.48px;top:1320.00px;font-size:16.50px;line-height:16.50px;font-weight:400;color:#8a8a8a;letter-spacing:-0.152px;white-space:nowrap;">87.5% conversion</div>
<div style="position:absolute;left:941px;top:518px;width:1006px;height:556px;overflow:hidden;border-radius:12px">
<div style="position:absolute;left:214.00px;top:71.00px;width:213.00px;height:3.00px;background:#111"></div>
<div style="position:absolute;left:33.00px;top:126.00px;width:942.00px;height:1.20px;background:#e6e6e6"></div>
<div style="position:absolute;left:33.00px;top:194.75px;width:942.00px;height:1.20px;background:#e6e6e6"></div>
<div style="position:absolute;left:33.00px;top:271.50px;width:942.00px;height:1.20px;background:#e6e6e6"></div>
<div style="position:absolute;left:33.00px;top:340.25px;width:942.00px;height:1.20px;background:#e6e6e6"></div>
<div style="position:absolute;left:33.00px;top:409.00px;width:942.00px;height:1.20px;background:#e6e6e6"></div>
<div style="position:absolute;left:33.00px;top:514.75px;width:942.00px;height:1.20px;background:#e6e6e6"></div>
<svg style="position:absolute;left:44.00px;top:141.00px;width:40px;height:40px" viewBox="0 0 40 40"><defs><clipPath id="cpfloyd"><circle cx="20" cy="20" r="20"/></clipPath></defs><g clip-path="url(#cpfloyd)"><rect width="40" height="40" fill="#70767c"/><path d="M26 0 L40 0 L40 40 L30 40Z" fill="#8f959b"/><ellipse cx="20" cy="42" rx="14" ry="8" fill="#d8d4d0"/><rect x="15.5" y="27" width="9" height="10" fill="#6e4630"/><ellipse cx="20" cy="21" rx="8.2" ry="11" fill="#855438"/><path d="M11.2 18 C10.5 6 29.5 6 28.8 18 C27 12.5 13 12.5 11.2 18Z" fill="#15100d"/><path d="M15.5 25.5 Q20 30 24.5 25.5 Q20 27.5 15.5 25.5Z" fill="#f3ece6"/><path d="M14 27 Q20 35 26 27 L26 30 Q20 37 14 30Z" fill="#2a1a12" opacity=".6"/></g></svg>
<svg style="position:absolute;left:44.00px;top:214.00px;width:40px;height:40px" viewBox="0 0 40 40"><defs><clipPath id="cpsophia1"><circle cx="20" cy="20" r="20"/></clipPath></defs><g clip-path="url(#cpsophia1)"><rect width="40" height="40" fill="#e9e9e9"/><ellipse cx="20" cy="43" rx="15" ry="9" fill="#ede3dc"/><rect x="16.5" y="27" width="7" height="9" fill="#e2bfae"/><ellipse cx="20" cy="22" rx="7.3" ry="9.5" fill="#e9cbb9"/><path d="M12.3 21 C11 10 29 10 27.7 21 C26 14.5 14 14.5 12.3 21Z" fill="#1f1a18"/><ellipse cx="20" cy="7.5" rx="5.5" ry="4.5" fill="#1f1a18"/><path d="M16.5 26 Q20 28.5 23.5 26" stroke="#c98f86" stroke-width="1" fill="none"/></g></svg>
<svg style="position:absolute;left:44.00px;top:287.00px;width:40px;height:40px" viewBox="0 0 40 40"><defs><clipPath id="cpsophia2"><circle cx="20" cy="20" r="20"/></clipPath></defs><g clip-path="url(#cpsophia2)"><rect width="40" height="40" fill="#d6d0d1"/><path d="M0 0 L14 0 L8 40 L0 40Z" fill="#e2d7d5"/><ellipse cx="20" cy="42" rx="16" ry="10" fill="#e6d6ca"/><rect x="17" y="25" width="6" height="8" fill="#d8ab97"/><ellipse cx="20" cy="20" rx="6.3" ry="8.5" fill="#ddb19e"/><path d="M13.5 17.5 C12.5 8 27.5 8 26.5 17.5 C25 12.5 15 12.5 13.5 17.5Z" fill="#1c1614"/></g></svg>
<svg style="position:absolute;left:44.00px;top:356.00px;width:40px;height:40px" viewBox="0 0 40 40"><defs><clipPath id="cpolivia"><circle cx="20" cy="20" r="20"/></clipPath></defs><g clip-path="url(#cpolivia)"><rect width="40" height="40" fill="#cfa57f"/><ellipse cx="20" cy="41" rx="19" ry="13" fill="#e2ad2a"/><rect x="16.5" y="22" width="7" height="8" fill="#7a4c32"/><ellipse cx="20" cy="17" rx="7" ry="9.5" fill="#8c5a3b"/><path d="M12.8 14 C12 4 28 4 27.2 14 C25.5 9 14.5 9 12.8 14Z" fill="#1c1410"/><path d="M16.5 21 Q20 24.5 23.5 21 Q20 22.5 16.5 21Z" fill="#f1e9e2"/></g></svg>
<svg style="position:absolute;left:44.00px;top:443.00px;width:40px;height:40px" viewBox="0 0 40 40"><defs><clipPath id="cpjames"><circle cx="20" cy="20" r="20"/></clipPath></defs><g clip-path="url(#cpjames)"><rect width="40" height="40" fill="#1f3526"/><path d="M0 17 L40 9 L40 14 L0 22Z" fill="#b9bdb0" opacity=".75"/><path d="M40 22 L40 40 L28 40Z" fill="#0f1d14"/><path d="M10 40 Q20 28 34 31 L40 40Z" fill="#ecebef"/><ellipse cx="18" cy="20" rx="8.5" ry="11" fill="#c88f6e"/><path d="M9.5 19 C9 7 27 7 26.5 19 C25 12 11 12 9.5 19Z" fill="#a06a46"/><path d="M11 24 Q18 34 25 24 L25 28 Q18 35 11 28Z" fill="#b0703e" opacity=".8"/><rect x="10.5" y="17" width="7" height="4.5" rx="1.5" fill="none" stroke="#1a1a1a" stroke-width="1.3"/><rect x="19" y="17" width="7" height="4.5" rx="1.5" fill="none" stroke="#1a1a1a" stroke-width="1.3"/></g></svg>
<svg style="position:absolute;left:44.00px;top:530.00px;width:40px;height:40px" viewBox="0 0 40 40"><defs><clipPath id="cpemma"><circle cx="20" cy="20" r="20"/></clipPath></defs><g clip-path="url(#cpemma)"><rect width="40" height="40" fill="#3a2a20"/><path d="M28 0 L40 0 L40 30Z" fill="#5a4a3a"/><ellipse cx="20" cy="24" rx="8.5" ry="11" fill="#dcb4ab"/><path d="M11 19 C10 7 30 7 29 19 C27 12 13 12 11 19Z" fill="#d6ccc6"/></g></svg>
<div style="position:absolute;left:54.71px;top:26.29px;font-size:22.00px;line-height:22.00px;font-weight:400;color:#333;letter-spacing:0.245px;white-space:nowrap;">To do request</div>
<div style="position:absolute;left:233.90px;top:26.29px;font-size:22.00px;line-height:22.00px;font-weight:400;-webkit-text-stroke:0.68px currentColor;color:#111;letter-spacing:0.689px;white-space:nowrap;">Recent activities</div>
<div style="position:absolute;left:42.67px;top:92.00px;font-size:18.60px;line-height:18.60px;font-weight:400;-webkit-text-stroke:0.32px currentColor;color:#222;letter-spacing:0.785px;white-space:nowrap;">Name</div>
<div style="position:absolute;left:296.92px;top:92.00px;font-size:18.60px;line-height:18.60px;font-weight:400;-webkit-text-stroke:0.32px currentColor;color:#222;letter-spacing:0.366px;white-space:nowrap;">Event</div>
<div style="position:absolute;left:786.42px;top:92.00px;font-size:18.60px;line-height:18.60px;font-weight:400;-webkit-text-stroke:0.32px currentColor;color:#222;letter-spacing:0.809px;white-space:nowrap;">Date</div>
<div style="position:absolute;left:95.67px;top:152.00px;font-size:18.60px;line-height:18.60px;font-weight:400;-webkit-text-stroke:0.32px currentColor;color:#222;letter-spacing:0.553px;white-space:nowrap;">Floyd Miles</div>
<div style="position:absolute;left:788.28px;top:152.00px;font-size:18.60px;line-height:18.60px;font-weight:400;color:#666;letter-spacing:0.359px;white-space:nowrap;">Today, 18:35</div>
<div style="position:absolute;left:96.36px;top:226.00px;font-size:18.60px;line-height:18.60px;font-weight:400;-webkit-text-stroke:0.32px currentColor;color:#222;letter-spacing:0.644px;white-space:nowrap;">Sophia Martinez</div>
<div style="position:absolute;left:788.28px;top:226.00px;font-size:18.60px;line-height:18.60px;font-weight:400;color:#666;letter-spacing:0.359px;white-space:nowrap;">Today, 18:35</div>
<div style="position:absolute;left:96.36px;top:299.00px;font-size:18.60px;line-height:18.60px;font-weight:400;-webkit-text-stroke:0.32px currentColor;color:#222;letter-spacing:0.644px;white-space:nowrap;">Sophia Martinez</div>
<div style="position:absolute;left:788.28px;top:299.00px;font-size:18.60px;line-height:18.60px;font-weight:400;color:#666;letter-spacing:0.359px;white-space:nowrap;">Today, 18:35</div>
<div style="position:absolute;left:96.32px;top:367.00px;font-size:18.60px;line-height:18.60px;font-weight:400;-webkit-text-stroke:0.32px currentColor;color:#222;letter-spacing:1.257px;white-space:nowrap;">Olivia Brown</div>
<div style="position:absolute;left:788.41px;top:367.00px;font-size:18.60px;line-height:18.60px;font-weight:400;color:#666;letter-spacing:0.234px;white-space:nowrap;">June 16, 2025</div>
<div style="position:absolute;left:96.91px;top:454.00px;font-size:18.60px;line-height:18.60px;font-weight:400;-webkit-text-stroke:0.32px currentColor;color:#222;letter-spacing:0.514px;white-space:nowrap;">James Smith</div>
<div style="position:absolute;left:788.41px;top:454.00px;font-size:18.60px;line-height:18.60px;font-weight:400;color:#666;letter-spacing:0.234px;white-space:nowrap;">June 14, 2025</div>
<div style="position:absolute;left:95.67px;top:541.00px;font-size:18.60px;line-height:18.60px;font-weight:400;-webkit-text-stroke:0.32px currentColor;color:#222;letter-spacing:-0.231px;white-space:nowrap;">Emma Davis</div>
<div style="position:absolute;left:788.41px;top:541.00px;font-size:18.60px;line-height:18.60px;font-weight:400;color:#666;letter-spacing:0.234px;white-space:nowrap;">June 12, 2025</div>
<div style="position:absolute;left:297.61px;top:153.00px;font-size:18.60px;line-height:18.60px;font-weight:400;color:#333;letter-spacing:0.551px;white-space:nowrap;">Send request:</div>
<div style="position:absolute;left:425.17px;top:153.00px;font-size:18.60px;line-height:18.60px;font-weight:400;-webkit-text-stroke:0.58px currentColor;color:#111;letter-spacing:0.974px;white-space:nowrap;">Meet with deal owner.</div>
<div style="position:absolute;left:629.61px;top:153.00px;font-size:18.60px;line-height:18.60px;font-weight:400;color:#333;letter-spacing:0.273px;white-space:nowrap;text-decoration:underline;text-underline-offset:3.5px;text-decoration-thickness:1.5px;">See more</div>
<div style="position:absolute;left:297.61px;top:211.00px;font-size:18.60px;line-height:18.60px;font-weight:400;color:#333;letter-spacing:0.551px;white-space:nowrap;">Send request:</div>
<div style="position:absolute;left:425.17px;top:211.00px;font-size:18.60px;line-height:18.60px;font-weight:400;-webkit-text-stroke:0.58px currentColor;color:#111;letter-spacing:0.974px;white-space:nowrap;">Meet with deal owner.</div>
<div style="position:absolute;left:296.92px;top:244.00px;font-size:18.60px;line-height:18.60px;font-weight:400;color:#333;letter-spacing:0.559px;white-space:nowrap;">Hi I want to book a meeting!</div>
<div style="position:absolute;left:548.86px;top:244.00px;font-size:18.60px;line-height:18.60px;font-weight:400;color:#333;letter-spacing:0.114px;white-space:nowrap;text-decoration:underline;text-underline-offset:3.5px;text-decoration-thickness:1.5px;">See less</div>
<div style="position:absolute;left:297.51px;top:298.00px;font-size:18.60px;line-height:18.60px;font-weight:400;-webkit-text-stroke:0.58px currentColor;color:#111;letter-spacing:1.030px;white-space:nowrap;">Confirm soft commitment.</div>
<div style="position:absolute;left:540.75px;top:298.00px;font-size:18.60px;line-height:18.60px;font-weight:400;color:#333;letter-spacing:0.389px;white-space:nowrap;">$100,000</div>
<div style="position:absolute;left:297.51px;top:368.00px;font-size:18.60px;line-height:18.60px;font-weight:400;-webkit-text-stroke:0.58px currentColor;color:#111;letter-spacing:0.984px;white-space:nowrap;">Cancel soft commitment.</div>
<div style="position:absolute;left:530.11px;top:368.00px;font-size:18.60px;line-height:18.60px;font-weight:400;color:#333;letter-spacing:0.308px;white-space:nowrap;text-decoration:underline;text-underline-offset:3.5px;text-decoration-thickness:1.5px;">See more</div>
<div style="position:absolute;left:297.51px;top:426.00px;font-size:18.60px;line-height:18.60px;font-weight:400;-webkit-text-stroke:0.58px currentColor;color:#111;letter-spacing:0.984px;white-space:nowrap;">Cancel soft commitment.</div>
<div style="position:absolute;left:529.42px;top:426.00px;font-size:18.60px;line-height:18.60px;font-weight:400;color:#333;letter-spacing:0.220px;white-space:nowrap;">Reason:</div>
<div style="position:absolute;left:298.37px;top:459.00px;font-size:18.60px;line-height:18.60px;font-weight:400;color:#333;letter-spacing:0.573px;white-space:nowrap;">Valuation no longer acceptable, Prefer to wait,</div>
<div style="position:absolute;left:296.73px;top:488.00px;font-size:18.60px;line-height:18.60px;font-weight:400;color:#333;letter-spacing:0.488px;white-space:nowrap;">I have change my mind lately.</div>
<div style="position:absolute;left:560.86px;top:488.00px;font-size:18.60px;line-height:18.60px;font-weight:400;color:#333;letter-spacing:0.186px;white-space:nowrap;text-decoration:underline;text-underline-offset:3.5px;text-decoration-thickness:1.5px;">See less</div>
<div style="position:absolute;left:296.92px;top:541.00px;font-size:18.60px;line-height:18.60px;font-weight:400;-webkit-text-stroke:0.58px currentColor;color:#111;letter-spacing:0.762px;white-space:nowrap;">Passed on the deal.</div>
<div style="position:absolute;left:479.86px;top:541.00px;font-size:18.60px;line-height:18.60px;font-weight:400;color:#333;letter-spacing:0.237px;white-space:nowrap;">See more</div>
</div>
</body></html>
